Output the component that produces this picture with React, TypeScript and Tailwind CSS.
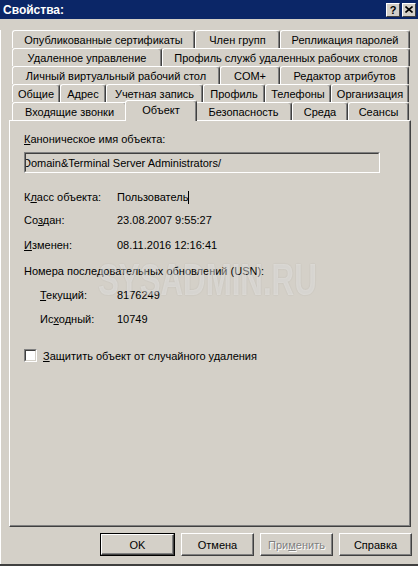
import React from "react";

const face = "bg-[#d4d0c8]";

type TabDef = { label: string; w: string; active?: boolean };

const rows: TabDef[][] = [
  [
    { label: "Опубликованные сертификаты", w: "w-[183px]" },
    { label: "Член групп", w: "w-[85px]" },
    { label: "Репликация паролей", w: "w-[130px]" },
  ],
  [
    { label: "Удаленное управление", w: "w-[150px]" },
    { label: "Профиль служб удаленных рабочих столов", w: "w-[248px]" },
  ],
  [
    { label: "Личный виртуальный рабочий стол", w: "w-[208px]" },
    { label: "COM+", w: "w-[60px]" },
    { label: "Редактор атрибутов", w: "w-[129px]" },
  ],
  [
    { label: "Общие", w: "w-[48px]" },
    { label: "Адрес", w: "w-[46px]" },
    { label: "Учетная запись", w: "w-[97px]" },
    { label: "Профиль", w: "w-[62px]" },
    { label: "Телефоны", w: "w-[66px]" },
    { label: "Организация", w: "w-[78px]" },
  ],
  [
    { label: "Входящие звонки", w: "w-[115px]" },
    { label: "Объект", w: "w-[72px]", active: true },
    { label: "Безопасность", w: "w-[97px]" },
    { label: "Среда", w: "w-[56px]" },
    { label: "Сеансы", w: "w-[61px]" },
  ],
];

function Tab({ label, w, active }: TabDef) {
  if (active) {
    return (
      <div
        className={`${w} h-[21px] -mx-[2px] -mb-px relative z-10 ${face} flex items-center justify-center pb-[3px] border-t border-l border-white border-r border-r-[#404040] shadow-[inset_-1px_0_0_#808080] rounded-t-[3px]`}
      >
        {label}
      </div>
    );
  }
  return (
    <div
      className={`${w} h-[18px] shrink-0 ${face} flex items-center justify-center border-t border-l border-white border-r border-r-[#404040] shadow-[inset_-1px_0_0_#808080] rounded-t-[3px] whitespace-nowrap`}
    >
      {label}
    </div>
  );
}

function Btn({ children, isDefault, disabled }: { children: React.ReactNode; isDefault?: boolean; disabled?: boolean }) {
  const inner = (
    <div
      className={`h-full w-full flex items-center justify-center border-t border-l border-white border-b border-r border-b-[#404040] border-r-[#404040] shadow-[inset_-1px_-1px_0_#808080] ${
        disabled ? "text-[#808080] [text-shadow:1px_1px_0_#ffffff]" : "text-black"
      }`}
    >
      {children}
    </div>
  );
  if (isDefault) {
    return <div className="w-[75px] h-[23px] border border-black">{inner}</div>;
  }
  return <div className="w-[73px] h-[23px]">{inner}</div>;
}

function Sunken({ className, children }: { className: string; children?: React.ReactNode }) {
  return (
    <div className={`${className} border-t border-l border-[#808080] border-b border-r border-b-white border-r-white`}>
      <div className="h-full w-full border-t border-l border-[#404040] border-b border-r border-b-[#d4d0c8] border-r-[#d4d0c8] overflow-hidden">
        {children}
      </div>
    </div>
  );
}

export default function App() {
  return (
    <div
      className={`relative w-[418px] h-[566px] ${face} text-[11px] text-black leading-[14px] border-b-2 border-b-[#404040] overflow-hidden`}
      style={{ fontFamily: '"Liberation Sans", Arial, sans-serif' }}
    >
      {/* title bar */}
      <div className="h-[19px] bg-[#0b2667] flex items-center justify-between pl-[3px] pr-[2px]">
        <span className="text-white font-bold text-[12px]">Свойства:</span>
        <div className="flex gap-[2px]">
          <div className={`w-[14px] h-[14px] ${face} flex items-center justify-center font-bold text-[11px] border-t border-l border-white border-b border-r border-b-[#404040] border-r-[#404040]`}>
            ?
          </div>
          <div className={`w-[14px] h-[14px] ${face} flex items-center justify-center border-t border-l border-white border-b border-r border-b-[#404040] border-r-[#404040]`}>
            <svg width="8" height="7" viewBox="0 0 8 7">
              <path d="M0.5 0.5 L7.5 6.5 M7.5 0.5 L0.5 6.5" stroke="#000" strokeWidth="1.6" />
            </svg>
          </div>
        </div>
      </div>

      <div className="border-l border-white h-[545px]">
        {/* tab rows */}
        <div className="ml-[11px] mt-[11px] w-[398px] flex flex-col">
          {rows.map((row, i) => (
            <div key={i} className={`flex ${i === rows.length - 1 ? "items-end h-[18px]" : ""}`}>
              {row.map((t) => (
                <Tab key={t.label} {...t} />
              ))}
            </div>
          ))}
        </div>

        {/* panel */}
        <div className="ml-[8px] w-[402px] h-[407px] border-t border-l border-white border-r border-b border-r-[#404040] border-b-[#404040] shadow-[inset_-1px_-1px_0_#808080]">
          <div className="pl-[14px] pt-[11px] flex flex-col">
            <div className="h-[14px]">
              <u>К</u>аноническое имя объекта:
            </div>
            <Sunken className="mt-[6px] w-[356px] h-[21px]">
              <div className="pl-[0px] -ml-[3px] h-full flex items-center whitespace-nowrap">
                Domain&amp;Terminal Server Administrators/
              </div>
            </Sunken>

            <div className="mt-[17px] h-[14px] flex">
              <span className="w-[93px]">
                К<u>л</u>асс объекта:
              </span>
              <span className="flex items-center">
                Пользователь
                <span className="inline-block w-px h-[13px] bg-black" />
              </span>
            </div>
            <div className="mt-[9px] h-[14px] flex">
              <span className="w-[93px]">
                Со<u>з</u>дан:
              </span>
              <span>23.08.2007 9:55:27</span>
            </div>
            <div className="mt-[11px] h-[14px] flex">
              <span className="w-[93px]">
                <u>И</u>зменен:
              </span>
              <span>08.11.2016 12:16:41</span>
            </div>
            <div className="mt-[12px] h-[14px]">Номера последовательных обновлений (USN):</div>
            <div className="mt-[10px] h-[14px] flex pl-[16px]">
              <span className="w-[77px]">
                <u>Т</u>екущий:
              </span>
              <span>8176249</span>
            </div>
            <div className="mt-[10px] h-[14px] flex pl-[16px]">
              <span className="w-[77px]">
                Ис<u>х</u>одный:
              </span>
              <span>10749</span>
            </div>
            <div className="mt-[23px] h-[13px] flex items-center gap-[6px]">
              <Sunken className="w-[13px] h-[13px]">
                <div className="w-full h-full bg-white" />
              </Sunken>
              <span>
                <u>З</u>ащитить объект от случайного удаления
              </span>
            </div>
          </div>
        </div>

        {/* buttons */}
        <div className="mt-[6px] pr-[6px] flex justify-end gap-[6px]">
          <Btn isDefault>OK</Btn>
          <Btn>Отмена</Btn>
          <Btn disabled>
            <span>
              При<u>м</u>енить
            </span>
          </Btn>
          <Btn>Справка</Btn>
        </div>
      </div>

      {/* watermark */}
      <div className="absolute left-[98px] top-[258px] pointer-events-none select-none">
        <div className="origin-left scale-x-[0.71] text-[44px] leading-[44px] font-bold text-white/40 [text-shadow:0_0_2px_rgba(0,0,0,0.12)] whitespace-nowrap">
          SYSADMIN.RU
        </div>
      </div>
    </div>
  );
}
